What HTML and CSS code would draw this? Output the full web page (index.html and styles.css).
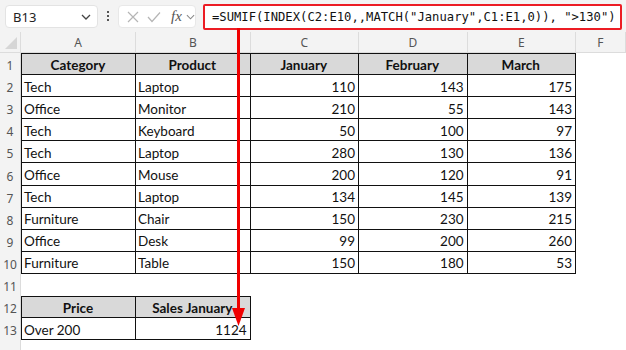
FILE: index.html
```html
<!DOCTYPE html>
<html lang="en">

<head>
    <meta charset="UTF-8">
    <title>SUMIF INDEX MATCH</title>
    <link rel="stylesheet" href="styles.css">
</head>

<body>
    <div class="toolbar">
        <div class="name-box">
            <span>B13</span>
            <svg class="chev" width="10" height="6" viewBox="0 0 10 6"><path d="M1 1 L5 5 L9 1" fill="none" stroke="#444" stroke-width="1.3"/></svg>
        </div>
        <div class="dots"><span></span><span></span><span></span></div>
        <div class="fx-box">
            <svg width="12" height="12" viewBox="0 0 12 12"><path d="M1 1 L11 11 M11 1 L1 11" stroke="#b5b5b5" stroke-width="1.2"/></svg>
            <svg width="14" height="12" viewBox="0 0 14 12"><path d="M1 6 L5 10.5 L13 1.5" fill="none" stroke="#b5b5b5" stroke-width="1.2"/></svg>
            <span class="fx">fx</span>
            <svg width="9" height="6" viewBox="0 0 10 6"><path d="M1 1 L5 5 L9 1" fill="none" stroke="#888" stroke-width="1.2"/></svg>
        </div>
        <div class="formula">=SUMIF(INDEX(C2:E10,,MATCH("January",C1:E1,0)), "&gt;130")</div>
    </div>

    <div class="sheet">
        <div class="corner"><span class="tri"></span></div>
        <div class="col-head">A</div>
        <div class="col-head">B</div>
        <div class="col-head">C</div>
        <div class="col-head">D</div>
        <div class="col-head">E</div>
        <div class="col-head">F</div>

        <div class="row-head">1</div>
        <div class="cell th top left">Category</div>
        <div class="cell th top">Product</div>
        <div class="cell th top">January</div>
        <div class="cell th top">February</div>
        <div class="cell th top">March</div>
        <div></div>

        <div class="row-head">2</div>
        <div class="cell left">Tech</div>
        <div class="cell">Laptop</div>
        <div class="cell num">110</div>
        <div class="cell num">143</div>
        <div class="cell num">175</div>
        <div></div>

        <div class="row-head">3</div>
        <div class="cell left">Office</div>
        <div class="cell">Monitor</div>
        <div class="cell num">210</div>
        <div class="cell num">55</div>
        <div class="cell num">143</div>
        <div></div>

        <div class="row-head">4</div>
        <div class="cell left">Tech</div>
        <div class="cell">Keyboard</div>
        <div class="cell num">50</div>
        <div class="cell num">100</div>
        <div class="cell num">97</div>
        <div></div>

        <div class="row-head">5</div>
        <div class="cell left">Tech</div>
        <div class="cell">Laptop</div>
        <div class="cell num">280</div>
        <div class="cell num">130</div>
        <div class="cell num">136</div>
        <div></div>

        <div class="row-head">6</div>
        <div class="cell left">Office</div>
        <div class="cell">Mouse</div>
        <div class="cell num">200</div>
        <div class="cell num">120</div>
        <div class="cell num">91</div>
        <div></div>

        <div class="row-head">7</div>
        <div class="cell left">Tech</div>
        <div class="cell">Laptop</div>
        <div class="cell num">134</div>
        <div class="cell num">145</div>
        <div class="cell num">139</div>
        <div></div>

        <div class="row-head">8</div>
        <div class="cell left">Furniture</div>
        <div class="cell">Chair</div>
        <div class="cell num">150</div>
        <div class="cell num">230</div>
        <div class="cell num">215</div>
        <div></div>

        <div class="row-head">9</div>
        <div class="cell left">Office</div>
        <div class="cell">Desk</div>
        <div class="cell num">99</div>
        <div class="cell num">200</div>
        <div class="cell num">260</div>
        <div></div>

        <div class="row-head">10</div>
        <div class="cell left">Furniture</div>
        <div class="cell">Table</div>
        <div class="cell num">150</div>
        <div class="cell num">180</div>
        <div class="cell num">53</div>
        <div></div>

        <div class="row-head">11</div>
        <div></div><div></div><div></div><div></div><div></div><div></div>

        <div class="row-head">12</div>
        <div class="cell th top left">Price</div>
        <div class="cell th top">Sales January</div>
        <div></div><div></div><div></div><div></div>

        <div class="row-head">13</div>
        <div class="cell left">Over 200</div>
        <div class="cell num">1124</div>
        <div></div><div></div><div></div><div></div>

        <div class="row-head"></div>
        <div></div><div></div><div></div><div></div><div></div><div></div>
    </div>

    <!-- red arrow from formula bar down to B13 -->
    <svg class="arrow" width="626" height="350" viewBox="0 0 626 350">
        <line x1="238.5" y1="28" x2="238.5" y2="312" stroke="#f00000" stroke-width="3"/>
        <polygon points="232,308 245,308 238.5,326" fill="#f00000"/>
    </svg>
</body>

</html>
```

FILE: styles.css
```css
body {
    margin: 0;
    width: 626px;
    height: 350px;
    overflow: hidden;
    background: white;
    position: relative;
    font-family: "Noto Sans", Arial, sans-serif;
}

.toolbar {
    height: 32px;
    background: #f3f3f3;
    display: flex;
    align-items: center;
    padding-left: 5px;
    box-sizing: border-box;
}

.name-box {
    width: 93px;
    height: 23px;
    background: white;
    border: 1px solid #e3e3e3;
    border-radius: 4px;
    box-sizing: border-box;
    display: flex;
    align-items: center;
    justify-content: space-between;
    padding: 0 6px 0 7px;
    font-size: 13px;
    color: #222;
    margin-top: 1px;
}

.dots {
    width: 20px;
    display: flex;
    flex-direction: column;
    align-items: center;
    gap: 2px;
}

.dots span {
    width: 2px;
    height: 2px;
    background: #555;
}

.fx-box {
    width: 78px;
    height: 23px;
    background: white;
    border: 1px solid #e8e8e8;
    border-radius: 4px;
    box-sizing: border-box;
    display: flex;
    align-items: center;
    gap: 8px;
    padding-left: 8px;
    margin-top: 1px;
}

.fx {
    font-family: "Liberation Serif", serif;
    font-style: italic;
    font-size: 15px;
    color: #555;
    margin-left: 2px;
    margin-right: -4px;
}

.formula {
    margin-left: 7px;
    width: 419px;
    height: 26px;
    margin-top: 2px;
    border: 2px solid #ec1c24;
    border-radius: 2px;
    box-sizing: border-box;
    background: white;
    font-family: "DejaVu Sans Mono", monospace;
    font-size: 12.2px;
    color: #111;
    display: flex;
    align-items: center;
    padding-left: 7px;
    white-space: nowrap;
    overflow: hidden;
}

.sheet {
    display: grid;
    grid-template-columns: 21px 115px 114.6px 108.4px 108.6px 108.4px 1fr;
    grid-template-rows: 21px repeat(13, 22.1px) 1fr;
    height: 318px;
    font-family: "Lato", "Open Sans", sans-serif;
    font-size: 13.5px;
    color: #111;
}

.corner {
    background: #f3f3f3;
    border-right: 1px solid #dcdcdc;
    border-bottom: 1px solid #dcdcdc;
    box-sizing: border-box;
    position: relative;
}

.tri {
    position: absolute;
    right: 3px;
    bottom: 3px;
    width: 0;
    height: 0;
    border-left: 12px solid transparent;
    border-bottom: 12px solid #d6d6d6;
}

.col-head {
    background: #f3f3f3;
    border-right: 1px solid #dcdcdc;
    border-bottom: 1px solid #dcdcdc;
    box-sizing: border-box;
    display: flex;
    align-items: center;
    justify-content: center;
    font-family: "Noto Sans", sans-serif;
    font-size: 12px;
    color: #555;
}

.row-head {
    background: #f3f3f3;
    border-right: 1px solid #dcdcdc;
    box-sizing: border-box;
    display: flex;
    align-items: center;
    justify-content: center;
    padding-top: 3px;
    font-family: "Noto Sans", sans-serif;
    font-size: 12px;
    color: #555;
}

.cell {
    border-right: 1px solid #111;
    border-bottom: 1px solid #111;
    box-sizing: border-box;
    display: flex;
    align-items: center;
    padding: 2px 3px 0 2px;
    white-space: nowrap;
    overflow: hidden;
}

.cell.top {
    border-top: 1px solid #111;
}

.cell.left {
    border-left: 1px solid #111;
}

.cell.th {
    background: #d9d9d9;
    font-weight: bold;
    justify-content: center;
}

.cell.num {
    justify-content: flex-end;
}

.arrow {
    position: absolute;
    left: 0;
    top: 0;
    pointer-events: none;
}
```
